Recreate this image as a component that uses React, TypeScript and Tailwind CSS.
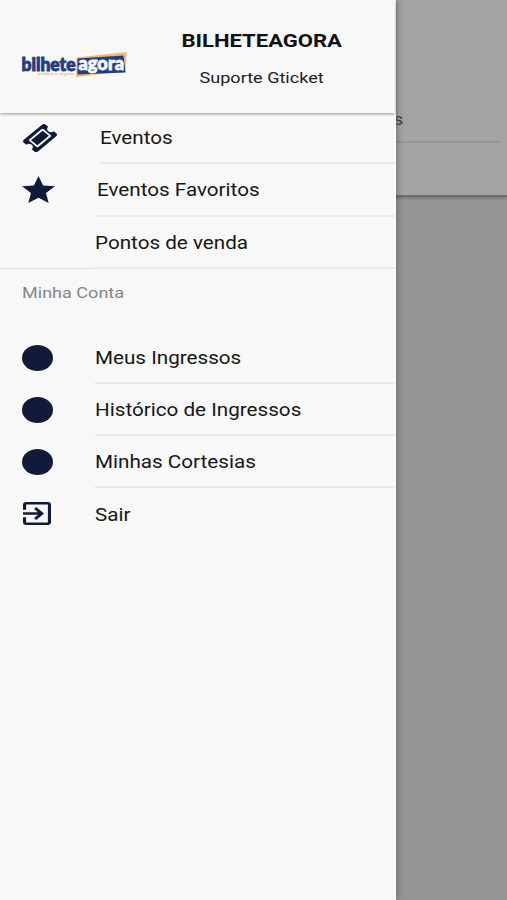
import type { ReactNode } from 'react';

const NAVY = '#111a39';

function TicketIcon() {
  return (
    <svg viewBox="53 53 1686 1686" preserveAspectRatio="none" className="ml-[1px] h-[28px] w-[34px]" fill={NAVY}>
      <path d="M1024 452l316 316-572 572-316-316zm-211 979l618-618q19-19 19-45t-19-45l-362-362q-18-18-45-18t-45 18l-618 618q-19 19-19 45t19 45l362 362q18 18 45 18t45-18zm889-637l-907 908q-37 37-90.5 37t-90.5-37l-126-126q56-56 56-136t-56-136-136-56-136 56l-125-126q-37-37-37-90.5t37-90.5l907-906q37-37 90.5-37t90.5 37l125 125q-56 56-56 136t56 136 136 56 136-56l126 125q37 37 37 90.5t-37 90.5z" />
    </svg>
  );
}

function StarIcon() {
  return (
    <svg viewBox="54 64 404 384" preserveAspectRatio="none" className="mb-[2px] h-[27px] w-[33px]" fill={NAVY}>
      <path d="M256 372.686L380.83 448l-33.021-142.066L458 210.409l-145.267-12.475L256 64l-56.743 133.934L54 210.409l110.192 95.525L131.161 448z" />
    </svg>
  );
}

function DotIcon() {
  return <span className="block h-[26px] w-[31px] rounded-[50%] bg-[#111a39]" />;
}

function ExitIcon() {
  return (
    <svg viewBox="3 3 18 18" preserveAspectRatio="none" className="mb-[1px] ml-[1px] h-[23px] w-[28px]" fill={NAVY}>
      <path d="M10.09 15.59L11.5 17l5-5-5-5-1.41 1.41L12.67 11H3v2h9.67l-2.58 2.59zM19 3H5c-1.11 0-2 .9-2 2v4h2V5h14v14H5v-4H3v4c0 1.1.89 2 2 2h14c1.1 0 2-.9 2-2V5c0-1.1-.9-2-2-2z" />
    </svg>
  );
}

function Logo() {
  return (
    <svg viewBox="0 0 106 27" className="h-[27px] w-[106px] overflow-visible" fontFamily="Lato, sans-serif" fontWeight="900">
      <path d="M54.500 5.500L104.500 0l-1 19L54 25z" fill="#f4b676" />
      <path d="M55.500 6.500L101.500 3.500l2 17L55.500 22.500z" fill="#21407f" />
      <text x="-0.500" y="18.500" fontSize="18" fill="#223c7c" stroke="#223c7c" strokeWidth="0.900" textLength="54" lengthAdjust="spacingAndGlyphs">
        bilhete
      </text>
      <text x="56.500" y="18" fontSize="18.500" fill="#f8f8f8" stroke="#f8f8f8" strokeWidth="0.800" textLength="45.500" lengthAdjust="spacingAndGlyphs">
        agora
      </text>
      <text x="16" y="22.500" fontSize="3.800" fontWeight="700" fill="#f2b981" textLength="36" lengthAdjust="spacingAndGlyphs">
        prático e seguro
      </text>
    </svg>
  );
}

interface ItemProps {
  icon?: ReactNode;
  label: string;
  indent?: string;
  last?: boolean;
}

function MenuItem({ icon, label, indent = 'ml-[72.500px]', last }: ItemProps) {
  return (
    <li className="flex h-[52.200px] pl-[22px]">
      <div className="flex w-0 shrink-0 items-center">
        <div className="shrink-0">{icon}</div>
      </div>
      <div className={`${indent} flex flex-1 items-center pt-[2px] ${last ? '' : 'border-b-2 border-[#e9e9e9]'}`}>
        <span className="origin-left scale-x-[1.180] whitespace-nowrap text-[17.500px] text-[#161616]">{label}</span>
      </div>
    </li>
  );
}

export default function App() {
  return (
    <div className="relative h-[900px] w-[507px] overflow-hidden bg-[#969696] font-[Roboto,sans-serif]">
      {/* dimmed page behind the drawer */}
      <div className="flex h-[197px] flex-col border-b-2 border-[#6b6b6b] bg-[#a4a4a4] pl-[393px] pr-[6px] shadow-[0_1px_3px_rgba(0,0,0,0.25)]">
        <div className="flex h-[143px] items-end border-b-2 border-[#969696] pb-[12px]">
          <span className="origin-left scale-x-[1.190] text-[17px] leading-[20px] text-[#444444]">s</span>
        </div>
      </div>

      <aside className="absolute inset-y-0 left-0 w-[396px] border-r border-white bg-[#f8f8f8] shadow-[0_0_8px_rgba(0,0,0,0.4)]">
        <header className="flex h-[113px] items-center pl-[22px] shadow-[0_1px_3px_rgba(0,0,0,0.4)]">
          <div className="mt-[18px] w-[106px]">
            <Logo />
          </div>
          <div className="flex flex-1 flex-col items-center pt-[4px]">
            <h1 className="scale-x-[1.260] text-[17.500px] font-bold leading-[22px] text-[#111111]">BILHETEAGORA</h1>
            <p className="mt-[16px] scale-x-[1.180] text-[15.300px] leading-[20px] text-[#202020]">Suporte Gticket</p>
          </div>
        </header>

        <ul className="-mt-[0.800px]">
          <MenuItem icon={<TicketIcon />} label="Eventos" indent="ml-[77.500px]" />
          <MenuItem icon={<StarIcon />} label="Eventos Favoritos" indent="ml-[75px]" />
          <MenuItem label="Pontos de venda" />
        </ul>

        <section className="-mt-px border-t border-[#e2e2e2]">
          <h2 className="flex h-[63px] items-start pl-[22px] pt-[14px]">
            <span className="origin-left scale-x-[1.180] text-[15.300px] leading-[20px] text-[#858585]">Minha Conta</span>
          </h2>
          <ul>
            <MenuItem icon={<DotIcon />} label="Meus Ingressos" />
            <MenuItem icon={<DotIcon />} label="Histórico de Ingressos" />
            <MenuItem icon={<DotIcon />} label="Minhas Cortesias" />
            <MenuItem icon={<ExitIcon />} label="Sair" last />
          </ul>
        </section>
      </aside>
    </div>
  );
}
